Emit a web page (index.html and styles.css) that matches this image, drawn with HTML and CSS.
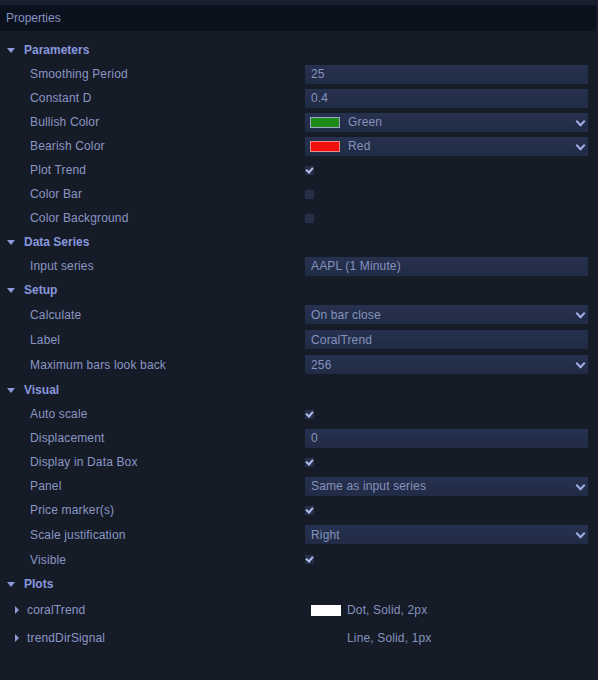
FILE: index.html
```html
<!DOCTYPE html>
<html lang="en">
<head>
    <meta charset="UTF-8">
    <meta name="viewport" content="width=device-width, initial-scale=1.0">
    <title>Properties</title>
    <link rel="stylesheet" href="styles.css">
</head>
<body>
    <div class="topStrip"></div>
    <div class="title">Properties</div>

    <div class="grid">
        <!-- Parameters -->
        <div class="head"><span class="down"></span>Parameters</div>
        <div class="row"><span class="label">Smoothing Period</span><span class="box">25</span></div>
        <div class="row"><span class="label">Constant D</span><span class="box">0.4</span></div>
        <div class="row"><span class="label">Bullish Color</span><span class="box select"><i class="swatch green"></i>Green</span></div>
        <div class="row"><span class="label">Bearish Color</span><span class="box select"><i class="swatch red"></i>Red</span></div>
        <div class="row"><span class="label">Plot Trend</span><span class="check on"></span></div>
        <div class="row"><span class="label">Color Bar</span><span class="check"></span></div>
        <div class="row"><span class="label">Color Background</span><span class="check"></span></div>

        <!-- Data Series -->
        <div class="head"><span class="down"></span>Data Series</div>
        <div class="row"><span class="label">Input series</span><span class="box">AAPL (1 Minute)</span></div>

        <!-- Setup -->
        <div class="head"><span class="down"></span>Setup</div>
        <div class="row tall"><span class="label">Calculate</span><span class="box select">On bar close</span></div>
        <div class="row tall"><span class="label">Label</span><span class="box">CoralTrend</span></div>
        <div class="row tall"><span class="label">Maximum bars look back</span><span class="box select">256</span></div>

        <!-- Visual -->
        <div class="head tall"><span class="down"></span>Visual</div>
        <div class="row"><span class="label">Auto scale</span><span class="check on"></span></div>
        <div class="row"><span class="label">Displacement</span><span class="box">0</span></div>
        <div class="row"><span class="label">Display in Data Box</span><span class="check on"></span></div>
        <div class="row"><span class="label">Panel</span><span class="box select">Same as input series</span></div>
        <div class="row"><span class="label">Price marker(s)</span><span class="check on"></span></div>
        <div class="row tall"><span class="label">Scale justification</span><span class="box select">Right</span></div>
        <div class="row tall"><span class="label">Visible</span><span class="check on"></span></div>

        <!-- Plots -->
        <div class="head"><span class="down"></span>Plots</div>
        <div class="row plot"><span class="label"><span class="right"></span>coralTrend</span><span class="plotVal"><i class="swatch white"></i>Dot, Solid, 2px</span></div>
        <div class="row plot"><span class="label"><span class="right"></span>trendDirSignal</span><span class="plotVal"><i class="swatch none"></i>Line, Solid, 1px</span></div>
    </div>
</body>
</html>
```

FILE: styles.css
```css
body {
  margin: 0;
  background-color: #161b28;
  font-family: "Liberation Sans", Arial, sans-serif;
  font-size: 12px;
  letter-spacing: 0.15px;
  color: #8a97c2;
  height: 680px;
  overflow: hidden;
}

.topStrip {
  height: 5px;
  background-color: #181e2c;
}

/* Header bar */
.title {
  height: 26px;
  line-height: 26px;
  margin-right: 2px;
  padding-left: 6px;
  background-color: #0c111e;
  color: #8593c0;
  font-size: 12px;
  letter-spacing: 0;
}

.grid {
  padding-top: 7px;
}

.head,
.row {
  display: grid;
  grid-template-columns: 305px 283px;
  align-items: center;
  height: 24px;
}

.tall {
  height: 25px;
}

.head {
  display: flex;
  padding-left: 7px;
  font-weight: bold;
  letter-spacing: 0;
  color: #8898dc;
}

/* Triangles */
.down {
  width: 0;
  height: 0;
  border-left: 4px solid transparent;
  border-right: 4px solid transparent;
  border-top: 5px solid #8b9bd8;
  margin-right: 9px;
  margin-top: 1px;
}

.right {
  display: inline-block;
  width: 0;
  height: 0;
  border-top: 4px solid transparent;
  border-bottom: 4px solid transparent;
  border-left: 4px solid #8b9bd8;
  margin-right: 8px;
  vertical-align: 0;
}

.label {
  padding-left: 30px;
  white-space: nowrap;
}

.box {
  position: relative;
  display: flex;
  align-items: center;
  height: 19px;
  padding-left: 6px;
  background: linear-gradient(#26314f, #212b45);
  color: #8593bd;
  white-space: nowrap;
}

.select:after {
  content: "";
  position: absolute;
  right: 4px;
  top: 5px;
  width: 5px;
  height: 5px;
  border-right: 2px solid #9fb0e6;
  border-bottom: 2px solid #9fb0e6;
  transform: rotate(45deg);
}

.swatch {
  display: inline-block;
  width: 28px;
  height: 9px;
  margin-right: 8px;
  border: 1px solid #9aa8c8;
}

.box .swatch {
  margin-left: -1px;
}

.swatch.green {
  background-color: #1f8a1a;
}

.swatch.red {
  background-color: #f01010;
  border-color: #e88a8a;
}

.swatch.white {
  background-color: #ffffff;
  border-color: #ffffff;
}

.swatch.none {
  visibility: hidden;
}

/* Checkboxes */
.check {
  position: relative;
  width: 9px;
  height: 9px;
  background-color: #262f48;
}

.check.on:after {
  content: "";
  position: absolute;
  left: 2px;
  top: 0;
  width: 3px;
  height: 5px;
  border-right: 2px solid #b4c0ee;
  border-bottom: 2px solid #b4c0ee;
  transform: rotate(40deg);
}

.plot {
  height: 28px;
}

.plot .label {
  padding-left: 15px;
}

.plotVal {
  display: flex;
  align-items: center;
  padding-left: 6px;
  color: #8593bd;
}

.plotVal .swatch {
  margin-right: 6px;
}
```
